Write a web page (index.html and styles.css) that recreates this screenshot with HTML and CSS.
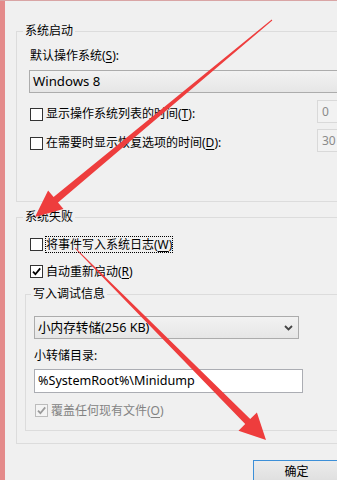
FILE: index.html
```html
<!DOCTYPE html>
<html lang="zh-CN">
<head>
<meta charset="utf-8">
<title>启动和故障恢复</title>
<link rel="stylesheet" href="styles.css">
</head>
<body>
<div class="window">
  <div class="strip"></div>
  <div class="content">
    <div class="group g1">
      <div class="gtitle">系统启动</div>
      <div class="label l-os">默认操作系统(<u>S</u>):</div>
      <div class="combo combo-os"><span class="lat-os">Windows 8</span></div>
      <div class="row r1">
        <span class="cb"></span>
        <span class="rtext">显示操作系统列表的时间(<u>T</u>):</span>
        <span class="spin">0</span>
      </div>
      <div class="row r2">
        <span class="cb"></span>
        <span class="rtext">在需要时显示恢复选项的时间(<u>D</u>):</span>
        <span class="spin">30</span>
      </div>
    </div>

    <div class="group g2">
      <div class="gtitle">系统失败</div>
      <div class="crow c3">
        <span class="cb"></span>
        <span class="ctext focus">将事件写入系统日志(<u>W</u>)</span>
      </div>
      <div class="crow c4">
        <span class="cb"><svg class="tick" viewBox="0 0 11 11" width="11" height="11"><path d="M2 5.6 L4.4 8.2 L9.2 2.4" fill="none" stroke="#000" stroke-width="1.8"/></svg></span>
        <span class="ctext">自动重新启动(<u>R</u>)</span>
      </div>
      <div class="group g3">
        <div class="gtitle">写入调试信息</div>
        <div class="combo combo-dump">
          <span class="lat">小内存转储(256 KB)</span>
          <svg class="chev" viewBox="0 0 9 6" width="9" height="6"><path d="M1 1 L4.5 4.5 L8 1" fill="none" stroke="#444" stroke-width="1.8"/></svg>
        </div>
        <div class="label l-dir">小转储目录:</div>
        <div class="input"><span class="lat">%SystemRoot%\Minidump</span></div>
        <div class="crow c5">
          <span class="cb dis"><svg class="tick" viewBox="0 0 11 11" width="11" height="11"><path d="M2 5.6 L4.4 8.2 L9.2 2.4" fill="none" stroke="#9a9a9a" stroke-width="1.8"/></svg></span>
          <span class="ctext distext">覆盖任何现有文件(<u>O</u>)</span>
        </div>
      </div>
    </div>

    <div class="buttons">
      <div class="btn">确定</div>
    </div>
  </div>
</div>

<svg class="arrows" viewBox="0 0 337 480" width="337" height="480">
  <polygon fill="#ee3d3d" points="272.3,20.4 58.0,202.4 63.5,208.9 35,217 48.1,190.5 53.6,197.0 271.7,19.6"/>
  <polygon fill="#ee3d3d" points="75.35,247.65 250.2,419.1 256.9,412.4 266,440 238.5,430.8 245.2,424.1 74.65,248.35"/>
</svg>
</body>
</html>
```

FILE: styles.css
```css
html, body {
  margin: 0;
  padding: 0;
}
body {
  width: 337px;
  height: 480px;
  overflow: hidden;
  background: #f0f0f0;
  font-family: "Noto Sans", "Noto Sans CJK SC", sans-serif;
  font-size: 12px;
  color: #000;
  position: relative;
}
u {
  text-decoration: underline;
  text-underline-offset: 2px;
}
.lat {
  font-size: 12.6px;
}
.lat-os {
  font-size: 13.2px;
}
.window {
  display: flex;
  height: 479px;
  border-top: 1px solid #d9a5a5;
}
.strip {
  width: 5px;
  flex: none;
  background: #e48a8a;
}
.content {
  flex: none;
  box-sizing: border-box;
  width: 332px;
  padding: 30px 0 0 11px;
}
.group {
  box-sizing: border-box;
  border: 1px solid #dcdcdc;
  border-right: none;
  width: 321px;
  padding-left: 13px;
}
.gtitle {
  width: max-content;
  line-height: 16px;
  margin: -9px 0 0 -7px;
  padding: 0 2px;
  background: #f0f0f0;
}
.g1 {
  height: 171px;
}
.label {
  line-height: 16px;
}
.l-os {
  margin-top: 9px;
}
.combo {
  box-sizing: border-box;
  height: 23px;
  border: 1px solid #acacac;
  background: linear-gradient(#f2f2f2, #e6e6e6);
  padding-left: 3px;
  display: flex;
  align-items: center;
  justify-content: space-between;
  line-height: 21px;
}
.combo-os {
  margin: 6px 0 0 -1px;
  width: 308px;
  border-right: none;
}
.row {
  display: flex;
  align-items: flex-start;
  width: 307px;
  height: 24px;
}
.r1 {
  margin-top: 7px;
}
.r2 {
  margin-top: 5px;
}
.cb {
  box-sizing: border-box;
  width: 13px;
  height: 13px;
  flex: none;
  border: 1px solid #333;
  background: #fff;
  display: flex;
  align-items: center;
  justify-content: center;
}
.cb.dis {
  border-color: #bcbcbc;
  background: #f4f4f4;
}
.tick {
  display: block;
}
.row .cb {
  margin-top: 8px;
}
.rtext {
  margin: 6px 0 0 3px;
  line-height: 16px;
}
.spin {
  margin-left: auto;
  box-sizing: border-box;
  width: 20px;
  height: 23px;
  border: 1px solid #d9d9d9;
  border-right: none;
  background: #f2f2f2;
  color: #8a8a8a;
  padding-left: 4px;
  line-height: 21px;
  white-space: nowrap;
  overflow: hidden;
}
.g2 {
  margin-top: 15px;
  height: 227px;
}
.crow {
  display: flex;
  align-items: center;
  height: 17px;
}
.ctext {
  line-height: 15px;
  margin-left: 3px;
}
.focus {
  outline: 1px dotted #000;
}
.c3 {
  margin-top: 11px;
}
.c4 {
  margin-top: 10px;
}
.g3 {
  margin: 14px 0 0 -5px;
  height: 137px;
  width: 312px;
  padding-left: 8px;
}
.g3 .gtitle {
  margin-left: -3px;
}
.combo-dump {
  margin-top: 14px;
  width: 265px;
  padding-right: 5px;
}
.chev {
  display: block;
}
.l-dir {
  margin-top: 9px;
}
.input {
  box-sizing: border-box;
  margin-top: 5px;
  width: 269px;
  height: 24px;
  border: 1px solid #abadb3;
  background: #fff;
  padding-left: 3px;
  line-height: 22px;
}
.c5 {
  margin: 9px 0 0 1px;
}
.distext {
  color: #838383;
  margin-left: 3px;
}
.buttons {
  display: flex;
  margin-top: 16px;
  padding-left: 237px;
}
.btn {
  box-sizing: border-box;
  width: 84px;
  height: 20px;
  border: 1px solid #3c8fd8;
  border-right: none;
  border-bottom: none;
  background: linear-gradient(#ececec, #e0e0e0);
  text-align: center;
  padding-left: 2px;
  line-height: 22px;
}
.arrows {
  position: absolute;
  left: 0;
  top: 0;
  pointer-events: none;
}
```
